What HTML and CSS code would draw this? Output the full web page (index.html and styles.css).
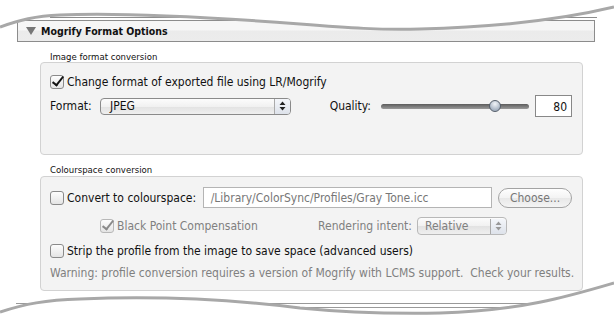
FILE: index.html
```html
<!DOCTYPE html>
<html lang="en">

<head>
  <meta charset="UTF-8">
  <title>Mogrify Format Options</title>
  <link rel="stylesheet" href="styles.css">
</head>

<body>
  <div class="page">
    <div class="section-head">
      <span class="disclosure"></span>
      <span>Mogrify Format Options</span>
    </div>

    <div class="groups">
      <div class="group-label">Image format conversion</div>
      <div class="group-box box-format">
        <div class="row">
          <span class="check checked"></span>
          <span>Change format of exported file using LR/Mogrify</span>
        </div>
        <div class="row row-format">
          <span class="field-label">Format:</span>
          <div class="popup popup-format">
            <span class="popup-text">JPEG</span>
            <span class="popup-arrows"><svg width="7" height="10" viewBox="0 0 7 10"><path d="M3.5 0.5 L6.5 4 H0.5 Z M3.5 9.5 L6.5 6 H0.5 Z" fill="#222"/></svg></span>
          </div>
          <span class="quality-label">Quality:</span>
          <div class="slider">
            <div class="track"></div>
            <div class="thumb" style="left: 77%"></div>
          </div>
          <div class="num-field">80</div>
        </div>
      </div>

      <div class="group-label label-colour">Colourspace conversion</div>
      <div class="group-box box-colour">
        <div class="row row-path">
          <span class="check"></span>
          <span class="path-label">Convert to colourspace:</span>
          <div class="text-field">/Library/ColorSync/Profiles/Gray Tone.icc</div>
          <div class="push-button">Choose...</div>
        </div>
        <div class="row row-bpc dim">
          <span class="check checked disabled"></span>
          <span>Black Point Compensation</span>
          <span class="intent-label">Rendering intent:</span>
          <div class="popup popup-intent">
            <span class="popup-text">Relative</span>
            <span class="popup-arrows"><svg width="7" height="10" viewBox="0 0 7 10"><path d="M3.5 0.5 L6.5 4 H0.5 Z M3.5 9.5 L6.5 6 H0.5 Z" fill="#999"/></svg></span>
          </div>
        </div>
        <div class="row row-strip">
          <span class="check"></span>
          <span>Strip the profile from the image to save space (advanced users)</span>
        </div>
        <div class="row warning">Warning: profile conversion requires a version of Mogrify with LCMS support.&nbsp; Check your results.</div>
      </div>
    </div>

    <!-- torn paper edges -->
    <svg class="edge edge-top" width="614" height="40" viewBox="0 0 614 40">
      <line x1="50" y1="17.5" x2="597" y2="17.5" stroke="#8c8c8c" stroke-width="1"/>
      <path d="M0,27 C20,20 35,16 60,15 C120,12 220,18 300,24 C350,28 380,30 420,29 C500,27 560,20 614,7 V0 H0 Z" fill="#fff"/>
      <path d="M0,27 C20,20 35,16 60,15 C120,12 220,18 300,24 C350,28 380,30 420,29 C500,27 560,20 614,7" fill="none" stroke="#a8a8a8" stroke-width="3"/>
    </svg>
    <svg class="edge edge-bottom" width="614" height="40" viewBox="0 276 614 40">
      <line x1="16" y1="303.5" x2="614" y2="303.5" stroke="#999" stroke-width="1"/>
      <line x1="16" y1="307.5" x2="614" y2="307.5" stroke="#999" stroke-width="1"/>
      <path d="M0,312 C25,304 45,300 80,299 C150,296 220,298 300,308 C340,312 380,314 440,313 C520,311 570,296 614,283 V316 H0 Z" fill="#fff"/>
      <path d="M0,312 C25,304 45,300 80,299 C150,296 220,298 300,308 C340,312 380,314 440,313 C520,311 570,296 614,283" fill="none" stroke="#a8a8a8" stroke-width="3"/>
    </svg>
  </div>
</body>

</html>
```

FILE: styles.css
```css
body {
  margin: 0;
  background-color: #fff;
  font-family: 'DejaVu Sans Condensed', 'DejaVu Sans', sans-serif;
  font-stretch: condensed;
  font-size: 12px;
  color: #111;
}

.page {
  position: relative;
  width: 614px;
  height: 316px;
  overflow: hidden;
  padding: 20px 0 0 17px;
  box-sizing: border-box;
}

.section-head {
  width: 578px;
  height: 22px;
  box-sizing: border-box;
  border: 1px solid #8c8c8c;
  background: linear-gradient(#f6f6f6 0%, #f6f6f6 45%, #ebebeb 50%, #ececec 100%);
  display: flex;
  align-items: center;
  gap: 5px;
  padding-left: 8px;
  font-weight: bold;
  font-size: 10.5px;
  color: #111;
}

.disclosure {
  width: 0;
  height: 0;
  border-left: 5px solid transparent;
  border-right: 5px solid transparent;
  border-top: 8px solid #777;
}

.groups {
  margin-left: 23px;
  width: 543px;
}

.group-label {
  font-size: 9.5px;
  line-height: 10px;
  margin: 10px 0 0 10px;
  color: #111;
}

.group-box {
  box-sizing: border-box;
  border: 1px solid #d2d2d2;
  border-radius: 4px;
  background-color: #f3f3f3;
  padding: 0 10px 0 9px;
  display: flex;
  flex-direction: column;
}

.box-format {
  height: 93px;
  padding-top: 11px;
  gap: 5px;
}

.box-colour {
  margin-top: 1px;
  height: 115px;
  padding-top: 10px;
}

.row {
  display: flex;
  align-items: center;
  gap: 3px;
  height: 16px;
  white-space: nowrap;
}

.row-format {
  height: 22px;
}

.field-label {
  width: 47px;
}

.check {
  width: 14px;
  height: 14px;
  box-sizing: border-box;
  border: 1px solid #8a8a8a;
  border-radius: 3px;
  background: linear-gradient(#fdfdfd, #e4e4e4);
  position: relative;
  flex: none;
}

.check.checked::after {
  content: '';
  position: absolute;
  left: 4px;
  top: -2px;
  width: 4px;
  height: 10px;
  border-right: 2.5px solid #111;
  border-bottom: 2px solid #111;
  transform: rotate(38deg);
}

.check.disabled {
  border-color: #b8b8b8;
}

.check.disabled::after {
  border-color: #8a8a8a;
}

.popup {
  height: 17px;
  box-sizing: border-box;
  border: 1px solid #8a8a8a;
  border-radius: 4px;
  background: linear-gradient(#fcfcfc 0%, #f1f1f1 50%, #e2e2e2 51%, #efefef 100%);
  display: flex;
  align-items: center;
  justify-content: space-between;
  padding-left: 9px;
}

.popup-format {
  width: 191px;
}

.popup-arrows {
  width: 15px;
  height: 15px;
  border-left: 1px solid #aaa;
  display: flex;
  align-items: center;
  justify-content: center;
  background: linear-gradient(#f4f6fa, #dde2ea);
  border-radius: 0 3px 3px 0;
}

.quality-label {
  margin-left: auto;
  margin-right: 7px;
}

.slider {
  position: relative;
  width: 148px;
  height: 14px;
  margin-right: 3px;
  display: flex;
  align-items: center;
}

.track {
  width: 100%;
  height: 5px;
  border-radius: 3px;
  background: linear-gradient(#5c5c5c, #9a9a9a);
}

.thumb {
  position: absolute;
  top: 1px;
  width: 12px;
  height: 12px;
  margin-left: -6px;
  box-sizing: border-box;
  border-radius: 50%;
  border: 1px solid #555e6a;
  background: radial-gradient(circle at 50% 30%, #f2f5f9, #a6b2c2 70%);
}

.num-field {
  width: 37px;
  height: 22px;
  box-sizing: border-box;
  border: 1px solid #888;
  background-color: #fff;
  text-align: right;
  padding: 4px 4px 0 0;
}

.row-path {
  height: 21px;
}

.path-label {
  width: 133px;
}

.text-field {
  width: 290px;
  height: 21px;
  box-sizing: border-box;
  border: 1px solid #b4b4b4;
  background-color: #fff;
  color: #777;
  padding: 3px 0 0 7px;
}

.push-button {
  margin-left: 3px;
  width: 74px;
  height: 20px;
  box-sizing: border-box;
  border: 1px solid #a3a3a3;
  border-radius: 10px;
  background: linear-gradient(#fefefe 0%, #f3f3f3 50%, #e8e8e8 51%, #f4f4f4 100%);
  color: #777;
  text-align: center;
  line-height: 18px;
}

.row-bpc {
  height: 18px;
  margin-top: 9px;
  padding-left: 50px;
}

.dim {
  color: #808080;
}

.intent-label {
  margin-left: auto;
  margin-right: 2px;
}

.popup-intent {
  width: 90px;
  height: 18px;
  margin-right: 65px;
  border-color: #b8b8b8;
  padding-left: 7px;
}

.row-strip {
  margin-top: 8px;
}

.warning {
  margin-top: 7px;
  height: 14px;
  color: #808080;
}

.edge {
  position: absolute;
  left: 0;
}

.edge-top {
  top: 0;
}

.edge-bottom {
  bottom: 0;
}
```
